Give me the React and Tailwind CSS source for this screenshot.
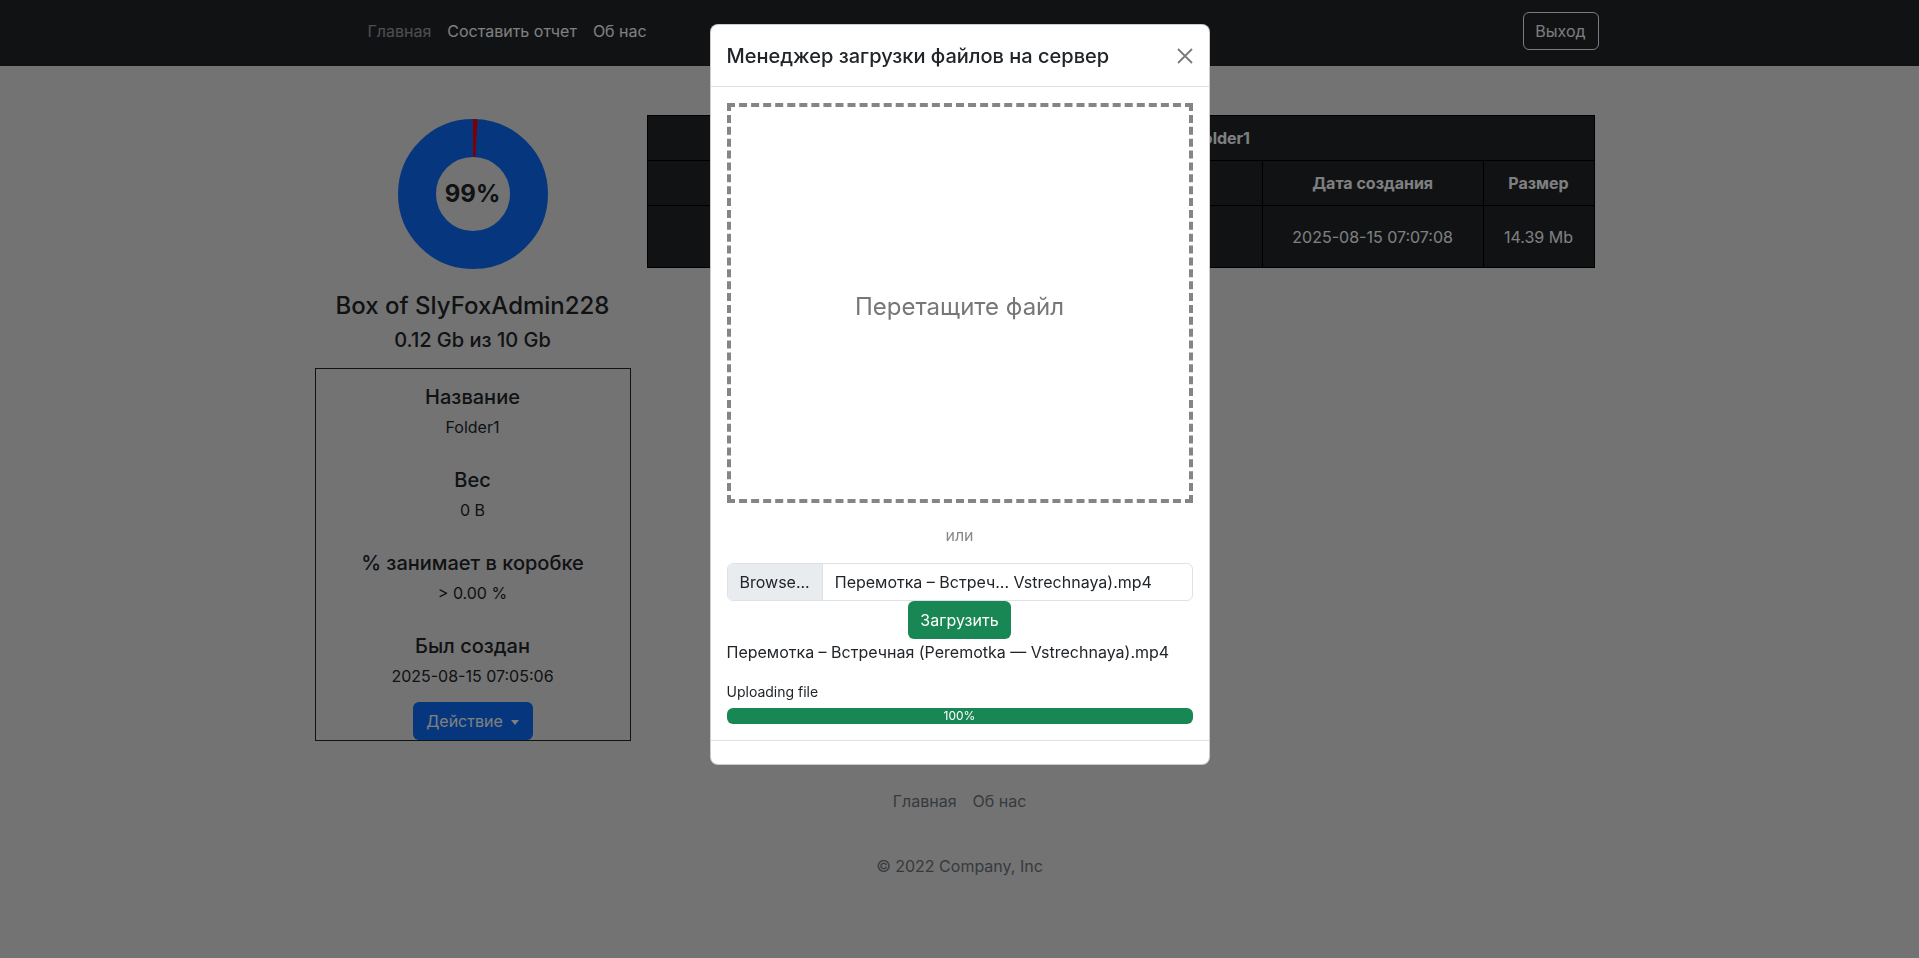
import React from 'react';

const font = { fontFamily: 'Inter, "Noto Sans", sans-serif' };

function Donut() {
  const r = 56;
  const c = 2 * Math.PI * r;
  return (
    <div className="relative h-[150px] w-[150px]">
      <svg width="150" height="150" viewBox="0 0 150 150">
        <circle cx="75" cy="75" r={r} fill="none" stroke="#0d6efd" strokeWidth="38" />
        <circle
          cx="75"
          cy="75"
          r={r}
          fill="none"
          stroke="#ff0000"
          strokeWidth="38"
          strokeDasharray={`${c * 0.01} ${c}`}
          transform="rotate(-90 75 75)"
        />
      </svg>
      <div className="absolute inset-0 flex items-center justify-center text-2xl font-bold text-[#212529]">
        99%
      </div>
    </div>
  );
}

function InfoItem({ title, value, last }) {
  return (
    <div className={last ? '' : 'mb-[29px]'}>
      <p className="text-xl font-medium leading-6">{title}</p>
      <p className="mt-[6px] text-base leading-6">{value}</p>
    </div>
  );
}

function Sidebar() {
  return (
    <aside className="flex w-[316px] shrink-0 flex-col items-center text-[#212529]">
      <div className="mt-[53px]">
        <Donut />
      </div>
      <h4 className="mt-[22px] text-2xl font-medium leading-[29px]">Box of SlyFoxAdmin228</h4>
      <h5 className="mt-2 text-xl font-medium leading-6">0.12 Gb из 10 Gb</h5>
      <div className="mt-4 flex w-full flex-col items-center border border-[#212529] pt-4 text-center">
        <InfoItem title="Название" value="Folder1" />
        <InfoItem title="Вес" value="0 B" />
        <InfoItem title="% занимает в коробке" value="> 0.00 %" />
        <InfoItem title="Был создан" value="2025-08-15 07:05:06" last />
        <button
          type="button"
          className="mt-[14px] flex h-[38px] w-[120px] items-center justify-center gap-2 rounded-md bg-[#0d6efd] text-base text-white"
        >
          Действие
          <span className="mt-[2px] border-x-[4px] border-t-[5px] border-x-transparent border-t-white" />
        </button>
      </div>
    </aside>
  );
}

function FilesTable() {
  return (
    <table className="mt-[49px] w-[948px] border-collapse bg-[#212529] text-base text-white">
      <thead>
        <tr>
          <th colSpan={4} className="h-[45px] border border-black pl-[42px] pr-2 text-center font-bold">
            Содержимое папки: Folder1
          </th>
        </tr>
        <tr>
          <th className="h-[45px] w-[308px] border border-black px-2 font-bold">Название</th>
          <th className="h-[45px] w-[308px] border border-black px-2 font-bold">Действие</th>
          <th className="h-[45px] w-[221px] border border-black px-2 font-bold">Дата создания</th>
          <th className="h-[45px] w-[111px] border border-black px-2 font-bold">Размер</th>
        </tr>
      </thead>
      <tbody>
        <tr>
          <td className="h-[62px] border border-black px-2 text-center">Перемотка.mp4</td>
          <td className="h-[62px] border border-black px-2 text-center">Скачать</td>
          <td className="h-[62px] border border-black px-2 text-center">2025-08-15 07:07:08</td>
          <td className="h-[62px] border border-black px-2 text-center">14.39 Mb</td>
        </tr>
      </tbody>
    </table>
  );
}

function UploadModal() {
  return (
    <div className="fixed inset-0 z-50 flex justify-center pt-[24px]">
      <div className="h-fit w-[500px] rounded-lg border border-black/20 bg-white text-[#212529]">
        <div className="flex h-[62px] items-center justify-between border-b border-[#dee2e6] px-4">
          <h5 className="text-xl font-medium leading-[30px]">Менеджер загрузки файлов на сервер</h5>
          <button type="button" className="flex h-4 w-4 items-center justify-center" aria-label="Закрыть">
            <svg width="16" height="16" viewBox="0 0 16 16">
              <path d="M1 1 15 15M15 1 1 15" stroke="#7a7a7a" strokeWidth="1.8" />
            </svg>
          </button>
        </div>
        <div className="p-4">
          <div className="flex h-[400px] items-center justify-center border-4 border-dashed border-[#858585]">
            <span className="mt-2 text-2xl text-[#777777]">Перетащите файл</span>
          </div>
          <p className="mb-4 mt-5 text-center text-base leading-6 text-[#8a8a8a]">или</p>
          <div className="flex h-[38px] overflow-hidden rounded-md border border-[#dee2e6]">
            <span className="flex items-center border-r border-[#dee2e6] bg-[#e9ecef] px-3">Browse...</span>
            <span className="flex items-center px-3">Перемотка – Встреч... Vstrechnaya).mp4</span>
          </div>
          <div className="flex justify-center">
            <button type="button" className="h-[38px] rounded-md bg-[#198754] px-3 text-base text-white">
              Загрузить
            </button>
          </div>
          <p className="mt-[1px] text-base leading-6">Перемотка – Встречная (Peremotka — Vstrechnaya).mp4</p>
          <p className="mt-4 text-sm leading-6">Uploading file</p>
          <div className="mt-1 flex h-4 items-center justify-center rounded-md bg-[#198754] text-xs text-white">
            100%
          </div>
        </div>
        <div className="h-[24px] border-t border-[#dee2e6]" />
      </div>
    </div>
  );
}

export default function App() {
  return (
    <div className="relative min-h-[958px] bg-[#e6e6e6]" style={font}>
      <nav className="bg-[#212529] pb-4 pt-3">
        <div className="mx-auto flex h-[38px] w-[1320px] items-center justify-between pl-[60px] pr-[21px]">
          <ul className="flex text-base">
            <li className="px-2 text-white/55">Главная</li>
            <li className="px-2 text-white">Составить отчет</li>
            <li className="px-2 text-white">Об нас</li>
          </ul>
          <button
            type="button"
            className="h-[38px] w-[76px] rounded-md border border-[#f8f9fa] text-base text-[#f8f9fa]"
          >
            Выход
          </button>
        </div>
      </nav>

      <main className="mx-auto w-[1320px] px-[15px]">
        <div className="flex items-start gap-4">
          <Sidebar />
          <FilesTable />
        </div>
        <footer className="mt-6 py-4">
          <ul className="flex justify-center border-b border-[#dee2e6] pb-4 text-base text-[#6c757d]">
            <li className="px-2 py-2 leading-6">Главная</li>
            <li className="px-2 py-2 leading-6">Об нас</li>
          </ul>
          <p className="mt-4 text-center leading-6 text-[#6c757d]">© 2022 Company, Inc</p>
        </footer>
      </main>

      <div className="fixed inset-0 z-40 bg-black/50" />
      <UploadModal />
    </div>
  );
}
